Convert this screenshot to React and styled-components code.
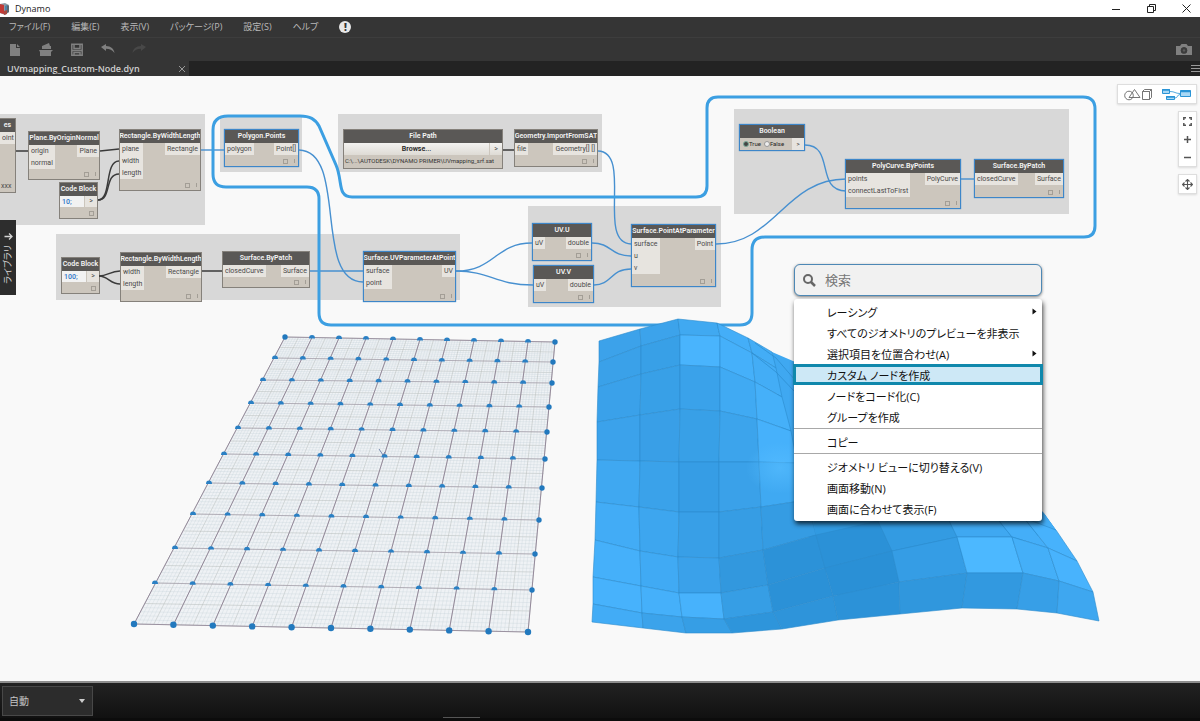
import React, { useState } from 'react'
import styled, { createGlobalStyle, css } from 'styled-components';

const GlobalStyle = createGlobalStyle`
  *, *::before, *::after {
    box-sizing: border-box;
  }
  body {
    margin: 0;
    background: #f9f9f9;
    font-family: "Open Sans", "Noto Sans CJK JP", sans-serif;
  }
  button, input, select {
    font: inherit;
    color: inherit;
    margin: 0;
    padding: 0;
    border: none;
    background: none;
  }
`;

const Window = styled.div`
  min-height: 100vh;
  display: flex;
  flex-direction: column;
  overflow: hidden;
`;

/* title bar */
const TitleBar = styled.header`
  height: 17px;
  background: #fff;
  display: flex;
  align-items: center;
  justify-content: space-between;
  padding-right: 7px;
`;
const AppName = styled.div`
  display: flex;
  align-items: center;
  gap: 5px;
  font-size: 9px;
  color: #222;
  svg {
    display: block;
  }
`;
const WindowButtons = styled.div`
  display: flex;
  gap: 21px;
`;
const WindowButton = styled.button`
  width: 14px;
  height: 16px;
  display: grid;
  place-content: center;
`;

/* menu bar */
const MenuBar = styled.nav`
  height: 20px;
  background: #353535;
  color: #b9b9b9;
  display: flex;
  align-items: center;
  gap: 21px;
  padding: 0 9px;
  font-size: 9px;
  font-feature-settings: "palt";
`;
const MenuButton = styled.button`
  line-height: 16px;
  white-space: nowrap;
`;
const Alert = styled.button`
  width: 12px;
  height: 12px;
  border-radius: 50%;
  background: #e8e8e8;
  color: #333;
  font-size: 10px;
  line-height: 12px;
  font-weight: 800;
`;

/* toolbar */
const Toolbar = styled.div`
  height: 24px;
  background: #353535;
  border-top: 1px solid #3d3d3d;
  display: flex;
  align-items: center;
  gap: 15px;
  padding: 0 8px;
`;
const ToolButton = styled.button`
  width: 16px;
  height: 16px;
  color: ${props => props.disabled ? '#484848' : '#808080'};
  svg {
    display: block;
  }
  &:last-child {
    margin-left: auto;
  }
`;

const TabBar = styled.div`
  height: 15px;
  background: #232323;
  color: #999;
  display: flex;
  align-items: stretch;
  justify-content: space-between;
`;
const Tab = styled.div`
  width: 189px;
  background: #353535;
  color: #d0d0d0;
  display: flex;
  align-items: center;
  justify-content: space-between;
  padding: 0 3px 0 7px;
  font-size: 9px;
  font-weight: 600;
`;
const TabButton = styled.button`
  display: grid;
  place-content: center;
  color: #999;
`;

/* workspace */
const Canvas = styled.main`
  flex: 1;
  min-height: 605px;
  position: relative;
  overflow: hidden;
  background: #f9f9f9;
`;
const Group = styled.div`
  position: absolute;
  left: ${props => props.$x}px;
  top: ${props => props.$y}px;
  width: ${props => props.$w}px;
  height: ${props => props.$h}px;
  background: #d8d8d8;
`;
const NodeBox = styled.section`
  position: absolute;
  left: ${props => props.$x}px;
  top: ${props => props.$y}px;
  width: ${props => props.$w}px;
  height: ${props => props.$h}px;
  display: flex;
  flex-direction: column;
  background: #ccc6bd;
  border: 1px solid #85817b;
  color: #4a4a4a;
  font-family: Roboto, sans-serif;
  font-size: 7px;
  line-height: 12px;
  white-space: nowrap;
  ${props => props.$selected && css`
    border-color: #3d86c9;
    box-shadow: 0 0 1px #3d86c9;
  `}
`;
const NodeTitle = styled.div`
  height: 13px;
  flex: none;
  background: #5a5856;
  color: #f4f4f4;
  font-weight: 600;
  line-height: 13px;
  display: flex;
  justify-content: center;
  overflow: hidden;
`;
const Ports = styled.div`
  display: flex;
  justify-content: space-between;
  align-items: flex-start;
`;
const PortList = styled.div`
  background: #e7e4df;
  padding: 0 2px;
`;
const Port = styled.div`
  height: 12px;
`;
const LacingText = styled.div`
  margin-top: auto;
  padding-left: 1px;
`;
const Lacing = styled.div`
  margin-top: auto;
  height: 10px;
  padding: 0 3px 0 0;
  display: flex;
  justify-content: flex-end;
  align-items: center;
  gap: 6px;
  &::before {
    content: '';
    width: 5px;
    height: 5px;
    border: 1px solid #a39e96;
  }
  &::after {
    content: '';
    width: 1px;
    height: 4px;
    background: #a39e96;
    display: ${props => props.$single ? 'none' : 'block'};
  }
`;
const CodeRow = styled.div`
  height: 11px;
  display: flex;
  line-height: 10px;
  background: #e7e4df;
`;
const CodeInput = styled.input`
  flex: 1;
  min-width: 0;
  padding: 0 2px;
  color: #2f75c8;
  background: #f2f2f2;
  font-weight: 500;
`;
const OutPort = styled.span`
  flex: none;
  width: 13px;
  text-align: center;
  border-left: 1px solid #ccc6bd;
`;
const Browse = styled.button`
  flex: 1;
  color: #222;
  font-weight: 600;
`;
const BrowseRow = styled.div`
  height: 12px;
  display: flex;
  background: linear-gradient(#f3f2f0, #dedbd5);
`;
const FilePath = styled.div`
  padding: 0 1px;
  color: #333;
  font-size: 6px;
`;
const BoolRow = styled.div`
  height: 12px;
  display: flex;
  align-items: center;
  gap: 3px;
  padding-left: 3px;
  color: #222;
  font-size: 6px;
  ${OutPort} {
    margin-left: auto;
    background: #e7e4df;
  }
`;
const BoolLabel = styled.label`
  display: flex;
  align-items: center;
`;
const Radio = styled.input`
  appearance: none;
  width: 6px;
  height: 6px;
  border: 1px solid #999;
  border-radius: 50%;
  background: #eee;
  &:checked {
    background: #444;
    border-color: #7a9;
  }
`;
const Drawing = styled.svg`
  position: absolute;
  left: 0;
  top: 0;
  pointer-events: none;
`;

const LibraryTab = styled.button`
  position: absolute;
  left: 0;
  top: 144px;
  width: 16px;
  height: 75px;
  background: #2d2d2d;
  color: #d5d5d5;
  display: flex;
  flex-direction: column;
  align-items: center;
  justify-content: center;
  gap: 4px;
  font-size: 9px;
  span {
    writing-mode: vertical-rl;
    text-orientation: sideways;
    font-feature-settings: "palt";
    line-height: 14px;
    transform: rotate(180deg);
  }
`;

/* view controls */
const ViewControls = styled.div`
  position: absolute;
  top: 8px;
  right: 3px;
  display: flex;
  flex-direction: column;
  align-items: flex-end;
  gap: 7px;
`;
const ControlBox = styled.div`
  display: flex;
  flex-direction: ${props => props.$column ? 'column' : 'row'};
  background: #fff;
  border: 1px solid #dedede;
  box-shadow: 0 1px 2px rgba(0, 0, 0, 0.12);
`;
const ControlButton = styled.button`
  width: ${props => props.$wide ? 39 : 17}px;
  height: 18px;
  display: grid;
  place-content: center;
  color: #555;
  & + & {
    border-left: ${props => props.$wide ? '1px solid #dedede' : 'none'};
  }
`;

/* context menu */
const ContextMenu = styled.div`
  position: absolute;
  left: 794px;
  top: 188px;
  width: 248px;
  display: flex;
  flex-direction: column;
  gap: 3px;
  font-feature-settings: "palt";
  color: #111;
`;
const SearchBox = styled.label`
  height: 32px;
  display: flex;
  align-items: center;
  gap: 9px;
  padding: 0 8px;
  color: #666;
  background: #f1f1f1;
  border: 1px solid #4d88b5;
  border-radius: 6px;
  box-shadow: 0 1px 3px rgba(0, 0, 0, 0.5);
`;
const SearchInput = styled.input`
  flex: 1;
  min-width: 0;
  outline: none;
  font-size: 13px;
  &::placeholder {
    color: #777;
    opacity: 1;
  }
`;
const MenuList = styled.div`
  padding: 2px 0;
  background: #fff;
  border-radius: 3px;
  box-shadow: 1px 3px 5px rgba(0, 0, 0, 0.75);
`;
const MenuItem = styled.button`
  width: 100%;
  height: 21px;
  padding: 0 5px 0 33px;
  display: flex;
  align-items: center;
  justify-content: space-between;
  font-size: 11px;
  text-align: left;
  ${props => props.$active && css`
    width: calc(100% + 2px);
    margin-left: -1px;
    padding-left: 31px;
    background: #cde8f6;
    border: 3px solid #1088ac;
  `}
`;
const Separator = styled.hr`
  margin: 1px 0 2px;
  border: none;
  border-top: 1px solid #a8a8a8;
`;

/* run bar */
const RunBar = styled.footer`
  height: 40px;
  padding: 3px 2px 0;
  display: flex;
  align-items: flex-start;
  background: linear-gradient(#222, #111);
  border-top: 2px solid #8e8e8e;
  border-bottom: 3px solid #0c0c0c;
`;
const Grip = styled.div`
  width: 37px;
  height: 1px;
  margin-left: 350px;
  align-self: flex-end;
  background: #555;
`;
const RunSelect = styled.div`
  width: 91px;
  height: 30px;
  position: relative;
  color: #c4c4c4;
  background: #2c2c2c;
  border: 1px solid #484848;
  select {
    appearance: none;
    width: 100%;
    height: 100%;
    padding-left: 6px;
    font-size: 10px;
  }
  svg {
    position: absolute;
    right: 7px;
    top: 12px;
    pointer-events: none;
  }
`;

const groups = [
  [0, 38, 205, 111],
  [220, 40, 82, 56],
  [56, 158, 404, 66],
  [338, 38, 264, 58],
  [528, 130, 193, 101],
  [734, 33, 335, 105],
];

const nodes = [
  { title: 'Plane.ByOriginNormal', x: 28, y: 55, w: 72, h: 49, ins: ['origin', 'normal'], out: 'Plane' },
  { title: 'Rectangle.ByWidthLength', x: 119, y: 53, w: 82, h: 62, ins: ['plane', 'width', 'length'], out: 'Rectangle' },
  { title: 'Rectangle.ByWidthLength', x: 120, y: 176, w: 82, h: 50, ins: ['width', 'length'], out: 'Rectangle' },
  { title: 'Surface.ByPatch', x: 222, y: 175, w: 88, h: 37, ins: ['closedCurve'], out: 'Surface' },
  { title: 'Polygon.Points', x: 224, y: 53, w: 75, h: 38, ins: ['polygon'], out: 'Point[]', selected: true },
  { title: 'Geometry.ImportFromSAT', x: 514, y: 53, w: 84, h: 38, ins: ['file'], out: 'Geometry[] []' },
  { title: 'Surface.UVParameterAtPoint', x: 363, y: 175, w: 93, h: 51, ins: ['surface', 'point'], out: 'UV', selected: true },
  { title: 'UV.U', x: 532, y: 147, w: 60, h: 38, ins: ['uV'], out: 'double', selected: true },
  { title: 'UV.V', x: 533, y: 189, w: 61, h: 38, ins: ['uV'], out: 'double', selected: true },
  { title: 'Surface.PointAtParameter', x: 631, y: 148, w: 85, h: 63, ins: ['surface', 'u', 'v'], out: 'Point', selected: true },
  { title: 'PolyCurve.ByPoints', x: 845, y: 83, w: 116, h: 50, ins: ['points', 'connectLastToFirst'], out: 'PolyCurve', selected: true },
  { title: 'Surface.ByPatch', x: 974, y: 83, w: 90, h: 39, ins: ['closedCurve'], out: 'Surface', selected: true },
];

const darkWires = [
  'M16 151H28',
  'M100 151L119 149',
  'M98 200C112 200 104 161 119 161',
  'M98 200C112 200 104 174 119 174',
  'M99 276C108 276 110 271 120 271',
  'M99 276C108 276 110 284 120 284',
  'M202 271H222',
  'M503 150H514',
];
const blueWires = [
  'M201 150H224',
  'M299 150C348 151 313 282 363 282',
  'M310 271H363',
  'M456 271C495 271 495 243 532 243',
  'M456 271C490 271 495 285 533 285',
  'M592 243C612 243 610 256 631 256',
  'M594 285C612 285 610 269 631 269',
  'M598 151C633 152 596 243 631 244',
  'M716 244C775 244 785 179 846 179',
  'M805 145C835 145 815 191 846 191',
  'M961 179H975',
];

const lasso = 'M228 116H300C310 116 315 119 319 126L336 165C343 181 337 197 352 197H696Q707 197 707 186V108Q707 97 718 97H1083Q1095 97 1095 109V226Q1095 237 1084 237H765Q752 237 752 250V313Q752 325 740 325H331Q319 325 319 313V199Q319 187 307 187H226Q213 187 213 174V130Q213 116 228 116Z';

/* left and right end of every row of the point grid */
const gridRows = [
  [285, 337, 555, 342],
  [275, 358, 553, 362],
  [263, 380, 552, 383],
  [251, 403, 549, 407],
  [238, 428, 547, 432],
  [224, 454, 545, 459],
  [209, 483, 542, 488],
  [193, 514, 539, 520],
  [175, 548, 535, 554],
  [155, 583, 532, 590],
  [134, 624, 528, 632],
];
const lerp = (a, b, t) => a + (b - a) * t;
const gridPoint = (row, t) => {
  const [x1, y1, x2, y2] = row;
  return [lerp(x1, x2, t), lerp(y1, y2, t)];
};
const fineRow = (n) => {
  const i = Math.min(Math.floor(n / 10), 9);
  return gridRows[i].map((v, k) => lerp(v, gridRows[i + 1][k], n / 10 - i));
};

/* surface vertices, one list per column, top to bottom */
const leftColumns = [
  [[599, 341], [599, 362], [598, 387], [597, 422], [597, 460], [596, 502], [595, 540], [593, 577], [593, 604], [592, 622]],
  [[640, 329], [641, 346], [641, 374], [640, 415], [640, 461], [639, 507], [640, 551], [641, 586], [642, 613], [643, 628]],
  [[678, 319], [680, 335], [680, 365], [680, 409], [679, 462], [679, 512], [678, 557], [679, 593], [682, 617], [686, 633]],
  [[717, 323], [720, 336], [720, 367], [720, 411], [719, 462], [719, 512], [719, 558], [721, 593], [724, 619], [732, 633]],
  [[748, 338], [752, 353], [755, 382], [757, 419], [759, 462], [761, 507], [763, 550], [768, 585], [773, 612], [782, 629]],
  [[772, 352], [776, 368], [782, 397], [791, 431], [797, 463], [807, 500], [816, 535], [825, 568], [833, 596], [838, 620]],
];
const rightColumns = [
  leftColumns[5].slice(6),
  [[878, 521], [892, 551], [899, 582], [900, 614]],
  [[944, 510], [957, 537], [967, 573], [962, 608]],
  [[992, 512], [1012, 537], [1023, 573], [1017, 609]],
  [[1024, 518], [1048, 548], [1059, 581], [1057, 613]],
  [[1056, 530], [1077, 561], [1093, 592], [1099, 621]],
];
const leftShades = [
  ['#3ca2ea', '#3aa1e9', '#3aa1ea', '#3ba2eb', '#3fa8f1', '#42acf6', '#45b0fa', '#47b2fc', '#42acf6'],
  ['#3ca3eb', '#38a0e7', '#38a0e7', '#399fe7', '#3aa2ea', '#3da6ef', '#40aaf4', '#45b0fa', '#3ba3eb'],
  ['#40a9f1', '#49b4fd', '#3aa2ea', '#38a0e7', '#369de5', '#389fe7', '#3aa1ea', '#47b2fc', '#369ee5'],
  ['#44aef8', '#45b0fa', '#40aaf3', '#3ca4ec', '#3aa1e9', '#369de4', '#3298de', '#369ee5', '#2e95db'],
  ['#43adf6', '#43adf6', '#45b0f9', '#46b1fb', '#3fa9f2', '#359ce3', '#2c92d8', '#2b91d7', '#2e94da'],
];
const rightShades = [
  ['#2b91d7', '#2a90d6', '#2c92d8'],
  ['#339be2', '#359de5', '#3097dd'],
  ['#3fa8f1', '#4cb8ff', '#3299e0'],
  ['#44aef8', '#44aff8', '#379fe7'],
  ['#47b2fc', '#48b3fd', '#3ea7f0'],
];

const Mesh = ({ columns, shades }) => shades.map((col, c) => col.map((fill, r) => {
  const quad = [columns[c][r], columns[c + 1][r], columns[c + 1][r + 1], columns[c][r + 1]];
  return <polygon key={`${c}-${r}`} points={quad.join(' ')} fill={fill} stroke="#2b8bcd" strokeWidth="0.8" strokeOpacity="0.75"/>
}));

const PointGrid = () => (
  <g>
    <polygon points="285,337 555,342 528,632 134,624" fill="#eff2f5"/>
    {Array.from({ length: 101 }, (_, n) => {
      const [x1, y1, x2, y2] = fineRow(n);
      const top = gridPoint(gridRows[0], n / 100);
      const bottom = gridPoint(gridRows[10], n / 100);
      const strong = n % 5 === 0;
      return (
        <g key={n} stroke={strong ? '#b5bbb8' : '#c2d1d6'} strokeWidth={strong ? 0.5 : 0.3}>
          <line x1={x1} y1={y1} x2={x2} y2={y2}/>
          <line x1={top[0]} y1={top[1]} x2={bottom[0]} y2={bottom[1]}/>
        </g>
      )
    })}
    {gridRows.map((row, i) => {
      const top = gridPoint(gridRows[0], i / 10);
      const bottom = gridPoint(gridRows[10], i / 10);
      const edge = i === 0 || i === 10;
      return (
        <g key={i} stroke="#94899a">
          <line x1={row[0]} y1={row[1]} x2={row[2]} y2={row[3]} strokeWidth={edge ? 0.9 : 0.5}/>
          <line x1={top[0]} y1={top[1]} x2={bottom[0]} y2={bottom[1]} strokeWidth="1"/>
        </g>
      )
    })}
    {gridRows.map((row, i) => Array.from({ length: 11 }, (_, k) => {
      const [x, y] = gridPoint(row, k / 10);
      if (i === 10 || k === 10 || (i === 0 && k === 0)) {
        return <circle key={`${i}-${k}`} cx={x} cy={y} r={i === 10 ? 3.2 : 2.7} fill="#2279be"/>
      }
      return <path key={`${i}-${k}`} d={`M${x - 3} ${y + 1}a3 3.4 0 0 1 6 0z`} fill="#2a80c4"/>
    }))}
    <path d="M379 449L383 455L385 452" stroke="#5a6f9c" strokeWidth="0.8" fill="none"/>
  </g>
)

const Surface = () => (
  <g>
    <defs>
      <radialGradient id="glow">
        <stop offset="0" stopColor="#55bcff" stopOpacity="0.7"/>
        <stop offset="1" stopColor="#55bcff" stopOpacity="0"/>
      </radialGradient>
    </defs>
    <path d="M772 352L800 364L960 430L1044 513L1056 530L1024 540L840 600L790 500Z" fill="#3fa8f1"/>
    <Mesh columns={leftColumns} shades={leftShades}/>
    <path d="M755 343L776 358L795 380M752 353L776 372L795 392" stroke="#2b8bcd" strokeWidth="0.7" fill="none"/>
    <ellipse cx="780" cy="468" rx="34" ry="26" fill="url(#glow)"/>
    <path d="M816 535L812 515H1045L1056 530L1024 540L992 530L944 530L878 540Z" fill="#319ae1"/>
    <path d="M944 515H1045L1056 530L1024 525L992 518Z" fill="#43adf6"/>
    <Mesh columns={rightColumns} shades={rightShades}/>
  </g>
)

const Node = ({ title, x, y, w, h, ins, out, selected }) => (
  <NodeBox $x={x} $y={y} $w={w} $h={h} $selected={selected}>
    <NodeTitle>{title}</NodeTitle>
    <Ports>
      <PortList>{ins.map(name => <Port key={name}>{name}</Port>)}</PortList>
      <PortList><Port>{out}</Port></PortList>
    </Ports>
    <Lacing/>
  </NodeBox>
)

const CodeBlock = ({ x, y, value }) => {
  const [code, setCode] = useState(value)
  return (
    <NodeBox $x={x} $y={y} $w={39} $h={37}>
      <NodeTitle>Code Block</NodeTitle>
      <CodeRow>
        <CodeInput aria-label="Code Block" value={code} onChange={e => setCode(e.target.value)}/>
        <OutPort>&gt;</OutPort>
      </CodeRow>
      <Lacing $single/>
    </NodeBox>
  )
}

const menuItems = [
  { label: 'レーシング', sub: true },
  { label: 'すべてのジオメトリのプレビューを非表示' },
  { label: '選択項目を位置合わせ(A)', sub: true },
  { label: 'カスタム ノードを作成', active: true },
  { label: 'ノードをコード化(C)' },
  { label: 'グループを作成' },
  null,
  { label: 'コピー' },
  null,
  { label: 'ジオメトリ ビューに切り替える(V)' },
  { label: '画面移動(N)' },
  { label: '画面に合わせて表示(F)' },
];

const App = () => {
  const [bool, setBool] = useState(true)
  return (
    <Window>
      <GlobalStyle/>
      <TitleBar>
        <AppName>
          <svg width="10" height="14" viewBox="0 0 10 14">
            <path d="M0 2L5 1L9 3V10L5 13L0 11Z" fill="#8c9aa5"/>
            <path d="M0 2L4 3V12L0 11Z" fill="#c23a35"/>
            <path d="M5 4L7 3V8L5 9Z" fill="#4d83a8"/>
            <path d="M4 9L7 8V12L4 13Z" fill="#a9483f"/>
            <path d="M7 3L9 4V10L7 11Z" fill="#5b6770"/>
          </svg>
          Dynamo
        </AppName>
        <WindowButtons>
          <WindowButton aria-label="最小化">
            <svg width="8" height="10"><path d="M0 5.5H8" stroke="#222"/></svg>
          </WindowButton>
          <WindowButton aria-label="元に戻す">
            <svg width="9" height="9" fill="none" stroke="#222"><path d="M0.5 2.5H6.5V8.5H0.5ZM2.5 2V0.5H8.5V6.5H7"/></svg>
          </WindowButton>
          <WindowButton aria-label="閉じる">
            <svg width="9" height="9" stroke="#222"><path d="M0.5 0.5L8.5 8.5M8.5 0.5L0.5 8.5"/></svg>
          </WindowButton>
        </WindowButtons>
      </TitleBar>
      <MenuBar>
        <MenuButton>ファイル(F)</MenuButton>
        <MenuButton>編集(E)</MenuButton>
        <MenuButton>表示(V)</MenuButton>
        <MenuButton>パッケージ(P)</MenuButton>
        <MenuButton>設定(S)</MenuButton>
        <MenuButton>ヘルプ</MenuButton>
        <Alert>!</Alert>
      </MenuBar>
      <Toolbar>
        <ToolButton aria-label="新規">
          <svg width="16" height="16" fill="currentColor"><path d="M2 2H8V6H12V14H2ZM9 2L12 5H9Z"/></svg>
        </ToolButton>
        <ToolButton aria-label="開く">
          <svg width="16" height="16" fill="currentColor"><path d="M3 4L10 1L11 4H12V7H3ZM0 8H14L12 10V14H1V10Z"/></svg>
        </ToolButton>
        <ToolButton aria-label="保存">
          <svg width="16" height="16" fill="none" stroke="currentColor" strokeWidth="1.5"><path d="M1.8 2.2H12.2V13.2H1.8ZM4 2.5V6.500H10V2.5M1.8 8.500H12.200M4 13V10.500H10V13"/></svg>
        </ToolButton>
        <ToolButton aria-label="元に戻す">
          <svg width="16" height="16" fill="currentColor"><path d="M0 5L5 2V4C10 4 13 7 13.500 11C11 8 9 6.800 5 6.800V9Z"/></svg>
        </ToolButton>
        <ToolButton aria-label="やり直し" disabled>
          <svg width="16" height="16" fill="currentColor"><path d="M14 5L9 2V4C4 4 1 7 0.500 11C3 8 5 6.800 9 6.800V9Z"/></svg>
        </ToolButton>
        <ToolButton aria-label="カメラ">
          <svg width="16" height="16" fill="currentColor"><path fillRule="evenodd" d="M0 4H4L5.500 2H10.500L12 4H16V13H0ZM8 5.200a3.200 3.200 0 1 0 .01 0Z" fill="#808080"/><circle cx="8" cy="8.400" r="3.200" fill="#3c3c3c"/><circle cx="8" cy="8.400" r="1.200" fill="#5c5c5c"/></svg>
        </ToolButton>
      </Toolbar>
      <TabBar>
        <Tab>
          UVmapping_Custom-Node.dyn
          <TabButton aria-label="タブを閉じる">
            <svg width="8" height="8" stroke="currentColor"><path d="M1 1L7 7M7 1L1 7"/></svg>
          </TabButton>
        </Tab>
        <TabButton aria-label="タブ一覧">
          <svg width="9" height="9" stroke="currentColor"><path d="M0 1.500H9M0 4.500H9M0 7.500H9"/></svg>
        </TabButton>
      </TabBar>
      <Canvas>
        {groups.map(([x, y, w, h]) => <Group key={`${x}-${y}`} $x={x} $y={y} $w={w} $h={h}/>)}
        <NodeBox $x={-1} $y={42} $w={17} $h={75}>
          <NodeTitle>es</NodeTitle>
          <PortList><Port>oint</Port></PortList>
          <LacingText>xxx</LacingText>
        </NodeBox>
        {nodes.map(node => <Node key={`${node.x}-${node.y}`} {...node}/>)}
        <CodeBlock x={59} y={106} value="10;"/>
        <CodeBlock x={61} y={181} value="100;"/>
        <NodeBox $x={343} $y={53} $w={160} $h={40}>
          <NodeTitle>File Path</NodeTitle>
          <BrowseRow>
            <Browse>Browse...</Browse>
            <OutPort>&gt;</OutPort>
          </BrowseRow>
          <FilePath>C:\...\AUTODESK\DYNAMO PRIMER\UVmapping_srf.sat</FilePath>
        </NodeBox>
        <NodeBox $x={739} $y={48} $w={66} $h={27} $selected>
          <NodeTitle>Boolean</NodeTitle>
          <BoolRow>
            <BoolLabel><Radio type="radio" name="bool" checked={bool} onChange={() => setBool(true)}/>True</BoolLabel>
            <BoolLabel><Radio type="radio" name="bool" checked={!bool} onChange={() => setBool(false)}/>False</BoolLabel>
            <OutPort>&gt;</OutPort>
          </BoolRow>
        </NodeBox>
        <Drawing width="1200" height="605" viewBox="0 76 1200 605">
          <g fill="none" stroke="#3a3a3a" strokeWidth="1.5">
            {darkWires.map(d => <path key={d} d={d}/>)}
          </g>
          <g fill="none" stroke="#4790d0" strokeWidth="1.4">
            {blueWires.map(d => <path key={d} d={d}/>)}
          </g>
          <path d={lasso} fill="none" stroke="#3c9fe2" strokeWidth="3"/>
          <PointGrid/>
          <Surface/>
        </Drawing>
        <LibraryTab>
          <svg width="9" height="9" fill="none" stroke="currentColor" strokeWidth="1.3"><path d="M0.500 4.500H8M5 1.500L8 4.500L5 7.500"/></svg>
          <span>ライブラリ</span>
        </LibraryTab>
        <ViewControls>
          <ControlBox>
            <ControlButton $wide aria-label="ジオメトリ ビュー">
              <svg width="28" height="13" fill="none" stroke="#666" strokeWidth="0.900">
                <circle cx="5" cy="7.500" r="4.300"/>
                <path d="M5 9.500L10.500 1.500L16 9.500ZM18.500 3.500H25.500V11.500H18.500ZM18.500 3.500L20.500 1.500H27.500V9.500L25.500 11.500M25.500 3.500L27.500 1.500"/>
              </svg>
            </ControlButton>
            <ControlButton $wide aria-label="グラフ ビュー">
              <svg width="29" height="13" fill="#a9d8f5" stroke="#2a94d6">
                <path d="M0.500 1.500H7.500V5.500H0.500ZM18.500 2.500H28.500V8.500H18.500ZM4.500 8.500H12.500V11.500H4.500Z"/>
                <path d="M0 2H8M18 3.500H29M4 9H13" strokeWidth="1.500"/>
                <path d="M8 3.500C13 3.500 13 5.500 18 5.500M13 10C16 10 15 6.500 18 6.500" fill="none" strokeWidth="0.800"/>
              </svg>
            </ControlButton>
          </ControlBox>
          <ControlBox $column>
            <ControlButton aria-label="全体表示">
              <svg width="9" height="9" fill="none" stroke="currentColor" strokeWidth="1.500"><path d="M0.800 3V0.800H3M6 0.800H8.200V3M8.200 6V8.200H6M3 8.200H0.800V6"/></svg>
            </ControlButton>
            <ControlButton aria-label="拡大">
              <svg width="9" height="9" stroke="currentColor" strokeWidth="1.500"><path d="M1 4.500H8M4.500 1V8"/></svg>
            </ControlButton>
            <ControlButton aria-label="縮小">
              <svg width="9" height="9" stroke="currentColor" strokeWidth="1.500"><path d="M1 4.500H8"/></svg>
            </ControlButton>
          </ControlBox>
          <ControlBox>
            <ControlButton aria-label="画面移動">
              <svg width="11" height="11" fill="none" stroke="currentColor" strokeWidth="1.100"><path d="M0.500 5.500H10.500M5.500 0.500V10.500M3.500 2.500L5.500 0.500L7.500 2.500M3.500 8.500L5.500 10.500L7.500 8.500M2.500 3.500L0.500 5.500L2.500 7.500M8.500 3.500L10.500 5.500L8.500 7.500"/></svg>
            </ControlButton>
          </ControlBox>
        </ViewControls>
        <ContextMenu>
          <SearchBox>
            <svg width="13" height="13" fill="none" stroke="currentColor"><circle cx="5" cy="5" r="4" strokeWidth="2"/><path d="M8 8L12 12" strokeWidth="2.500"/></svg>
            <SearchInput type="text" placeholder="検索" aria-label="検索"/>
          </SearchBox>
          <MenuList>
            {menuItems.map((item, i) => item
              ? (
                <MenuItem key={i} $active={item.active}>
                  {item.label}
                  {item.sub && <svg width="5" height="7"><path d="M0.500 0.500L4.500 3.500L0.500 6.500Z" fill="#111"/></svg>}
                </MenuItem>
              )
              : <Separator key={i}/>
            )}
          </MenuList>
        </ContextMenu>
      </Canvas>
      <RunBar>
        <RunSelect>
          <select aria-label="実行モード" defaultValue="auto">
            <option value="auto">自動</option>
          </select>
          <svg width="6" height="4"><path d="M0 0H6L3 4Z" fill="#ccc"/></svg>
        </RunSelect>
        <Grip/>
      </RunBar>
    </Window>
  )
}

export default App;
